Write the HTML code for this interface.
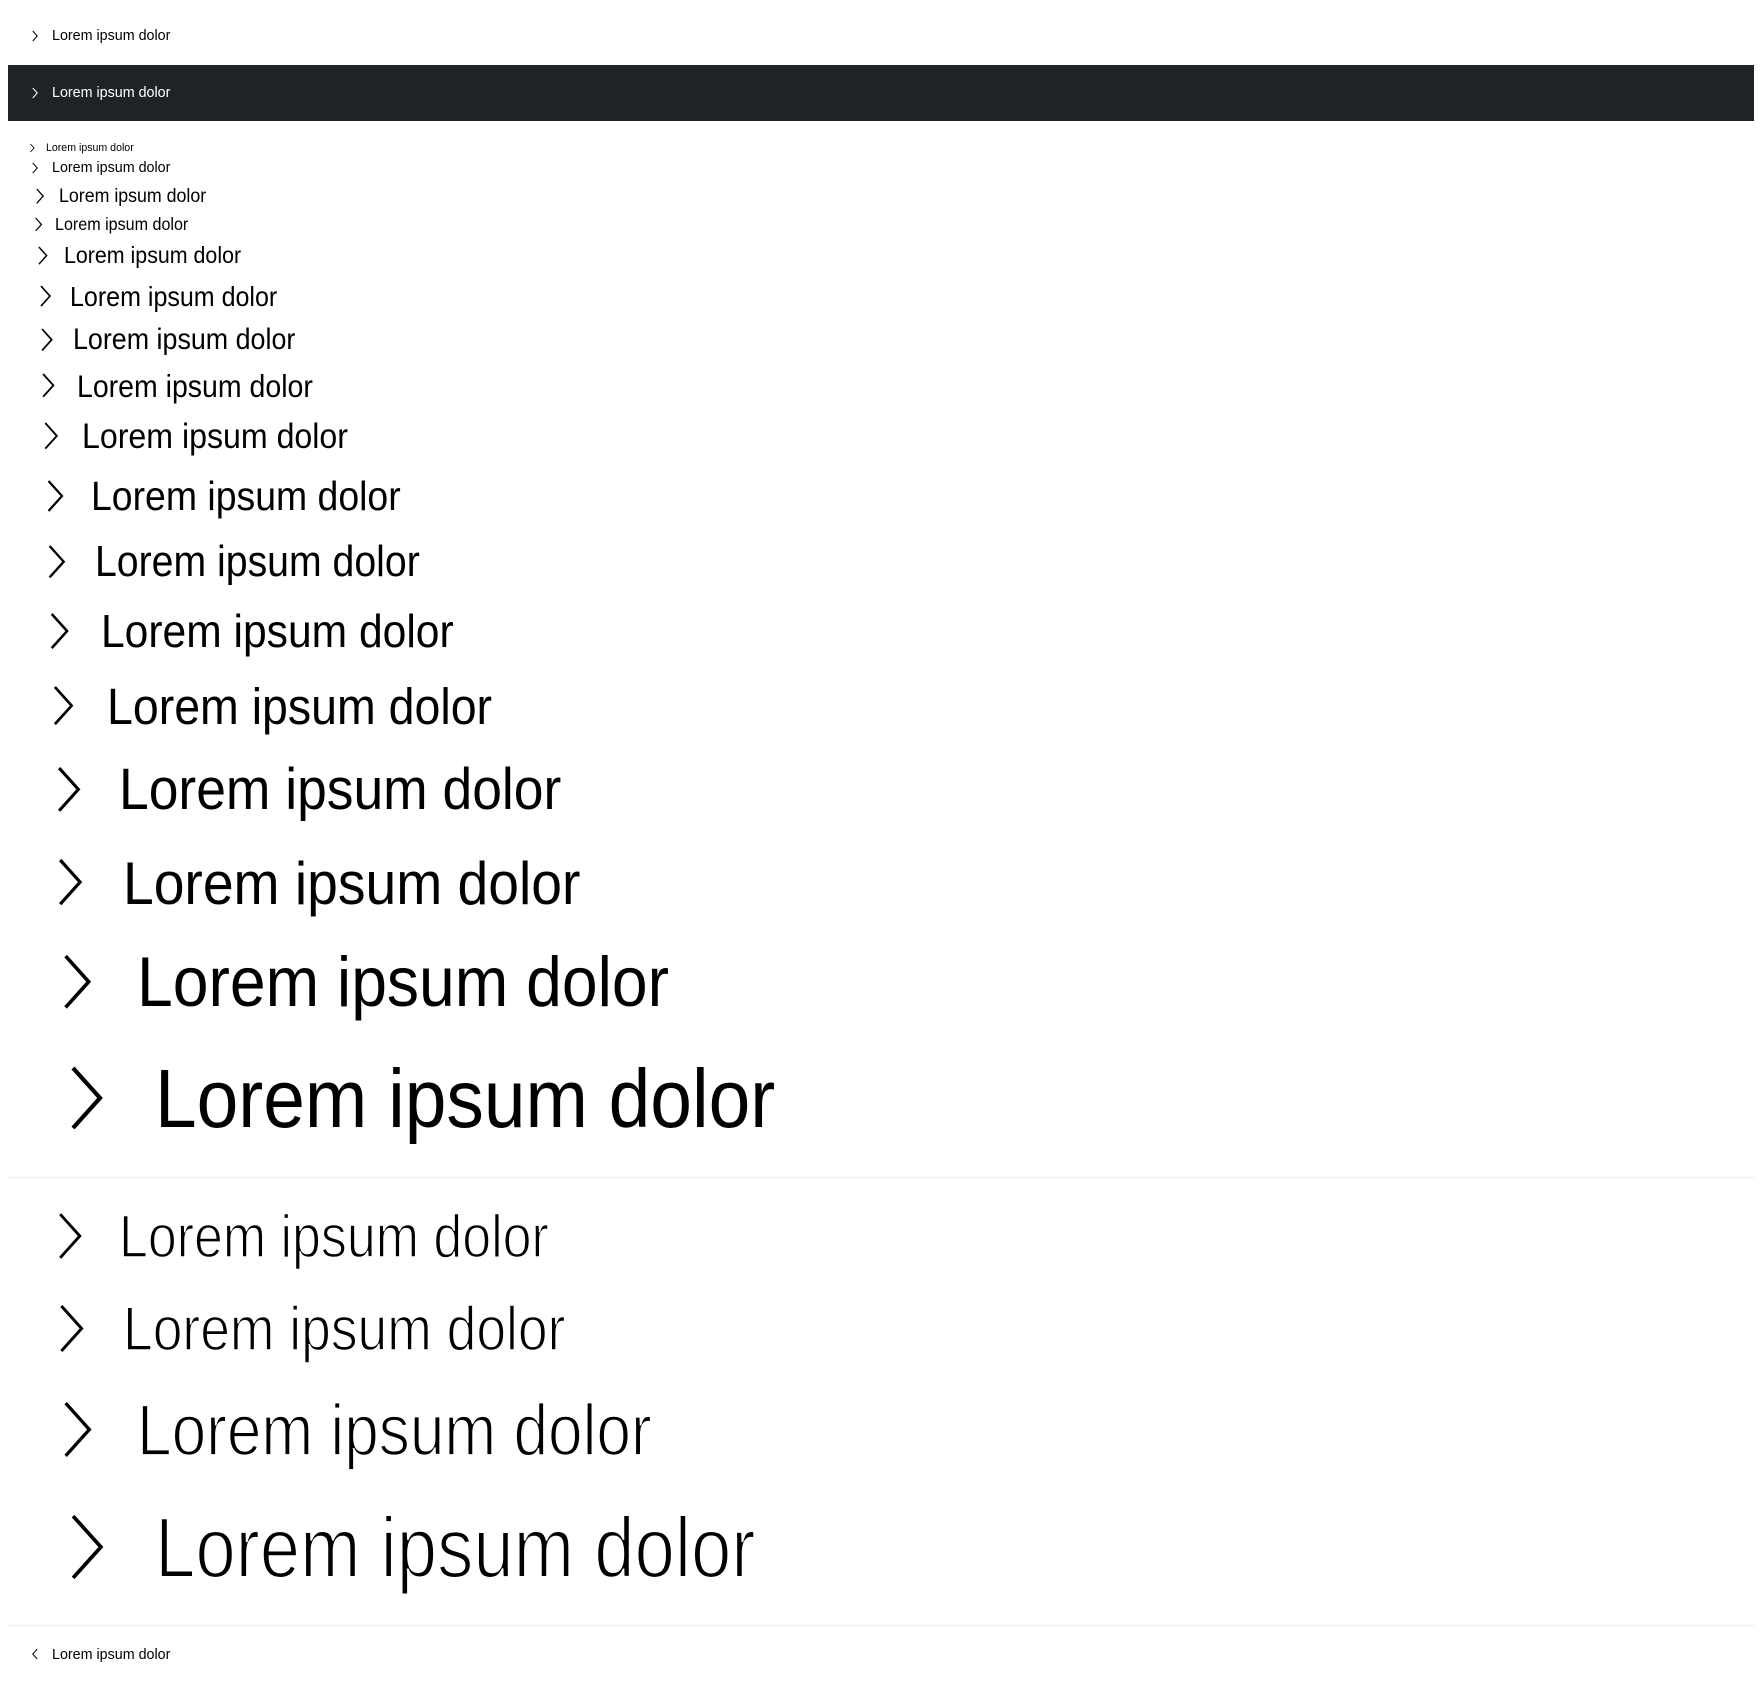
<!DOCTYPE html>
<html><head><meta charset="utf-8"><style>
html,body{margin:0;padding:0;background:#fff;width:1760px;height:1690px;overflow:hidden;position:relative;font-family:"Liberation Sans",sans-serif;}
.t{position:absolute;line-height:1;white-space:nowrap;color:#000;transform-origin:0 0;}
.c{position:absolute;overflow:visible;}
.band{position:absolute;left:8px;top:65px;width:1746px;height:56px;background:#1f2226;}
.sep{position:absolute;left:8px;width:1746px;height:1px;background:#ececec;}
.l{-webkit-text-stroke-color:#fff;}
</style></head><body>
<div class="band"></div>
<div class="sep" style="top:1177px"></div>
<div class="sep" style="top:1625px"></div>

<svg class="c" style="left:32px;top:31px" width="6" height="10" viewBox="0 0 11 20"><path d="M1 0 L10 10 L1 20" fill="none" stroke="#000" stroke-width="2"/></svg>
<div class="t" style="left:52px;top:29px;font-size:14.3px">Lorem ipsum dolor</div>
<svg class="c" style="left:32px;top:88px" width="6" height="10" viewBox="0 0 11 20"><path d="M1 0 L10 10 L1 20" fill="none" stroke="#fff" stroke-width="2"/></svg>
<div class="t" style="left:52px;top:86px;font-size:14.3px;color:#fff">Lorem ipsum dolor</div>
<svg class="c" style="left:30px;top:144px" width="4.5" height="8" viewBox="0 0 11 20"><path d="M1 0 L10 10 L1 20" fill="none" stroke="#000" stroke-width="2.2"/></svg>
<div class="t" style="left:46px;top:142.6px;font-size:10.6px">Lorem ipsum dolor</div>
<svg class="c" style="left:32px;top:163px" width="6" height="10" viewBox="0 0 11 20"><path d="M1 0 L10 10 L1 20" fill="none" stroke="#000" stroke-width="2"/></svg>
<div class="t" style="left:52px;top:160.9px;font-size:14.3px">Lorem ipsum dolor</div>
<svg class="c" style="left:35.6px;top:188.7px" width="7.9" height="14.3" viewBox="0 0 11 20"><path d="M1 0 L10 10 L1 20" fill="none" stroke="#000" stroke-width="1.8"/></svg>
<div class="t" style="left:58.5px;top:186.5px;font-size:19.55px;transform:scaleX(.91)">Lorem ipsum dolor</div>
<svg class="c" style="left:34.5px;top:218.1px" width="7.1" height="12.9" viewBox="0 0 11 20"><path d="M1 0 L10 10 L1 20" fill="none" stroke="#000" stroke-width="1.9"/></svg>
<div class="t" style="left:55px;top:216px;font-size:17.7px;transform:scaleX(.91)">Lorem ipsum dolor</div>
<svg class="c" style="left:37.7px;top:246.8px" width="9.5" height="17.2" viewBox="0 0 11 20"><path d="M1 0 L10 10 L1 20" fill="none" stroke="#000" stroke-width="1.7"/></svg>
<div class="t" style="left:64px;top:244.1px;font-size:23.5px;transform:scaleX(.91)">Lorem ipsum dolor</div>
<svg class="c" style="left:39.9px;top:285.9px" width="11" height="20.1" viewBox="0 0 11 20"><path d="M1 0 L10 10 L1 20" fill="none" stroke="#000" stroke-width="1.6"/></svg>
<div class="t" style="left:70px;top:282.7px;font-size:27.5px;transform:scaleX(.91)">Lorem ipsum dolor</div>
<svg class="c" style="left:40.9px;top:328.5px" width="11.8" height="21.5" viewBox="0 0 11 20"><path d="M1 0 L10 10 L1 20" fill="none" stroke="#000" stroke-width="1.6"/></svg>
<div class="t" style="left:73px;top:325px;font-size:29.5px;transform:scaleX(.91)">Lorem ipsum dolor</div>
<svg class="c" style="left:41.9px;top:374.2px" width="12.5" height="22.8" viewBox="0 0 11 20"><path d="M1 0 L10 10 L1 20" fill="none" stroke="#000" stroke-width="1.6"/></svg>
<div class="t" style="left:76.5px;top:370.5px;font-size:31.3px;transform:scaleX(.91)">Lorem ipsum dolor</div>
<svg class="c" style="left:44px;top:423.3px" width="14.1" height="25.7" viewBox="0 0 11 20"><path d="M1 0 L10 10 L1 20" fill="none" stroke="#000" stroke-width="1.5"/></svg>
<div class="t" style="left:82px;top:419.1px;font-size:35.3px;transform:scaleX(.91)">Lorem ipsum dolor</div>
<svg class="c" style="left:47.2px;top:481px" width="16.5" height="30" viewBox="0 0 11 20"><path d="M1 0 L10 10 L1 20" fill="none" stroke="#000" stroke-width="1.5"/></svg>
<div class="t" style="left:91px;top:476.2px;font-size:41.1px;transform:scaleX(.91)">Lorem ipsum dolor</div>
<svg class="c" style="left:48.2px;top:545.6px" width="17.3" height="31.4" viewBox="0 0 11 20"><path d="M1 0 L10 10 L1 20" fill="none" stroke="#000" stroke-width="1.5"/></svg>
<div class="t" style="left:94.5px;top:540.5px;font-size:43.1px;transform:scaleX(.91)">Lorem ipsum dolor</div>
<svg class="c" style="left:50.2px;top:613.9px" width="18.8" height="34.1" viewBox="0 0 11 20"><path d="M1 0 L10 10 L1 20" fill="none" stroke="#000" stroke-width="1.5"/></svg>
<div class="t" style="left:101px;top:608.4px;font-size:46.8px;transform:scaleX(.91)">Lorem ipsum dolor</div>
<svg class="c" style="left:52.5px;top:687.3px" width="20.5" height="37.2" viewBox="0 0 11 20"><path d="M1 0 L10 10 L1 20" fill="none" stroke="#000" stroke-width="1.45"/></svg>
<div class="t" style="left:107px;top:681.2px;font-size:51.1px;transform:scaleX(.91)">Lorem ipsum dolor</div>
<svg class="c" style="left:56.7px;top:768.2px" width="23.5" height="42.8" viewBox="0 0 11 20"><path d="M1 0 L10 10 L1 20" fill="none" stroke="#000" stroke-width="1.45"/></svg>
<div class="t" style="left:119px;top:761.3px;font-size:58.7px;transform:scaleX(.91)">Lorem ipsum dolor</div>
<svg class="c" style="left:57.7px;top:860.3px" width="24.3" height="44.2" viewBox="0 0 11 20"><path d="M1 0 L10 10 L1 20" fill="none" stroke="#000" stroke-width="1.45"/></svg>
<div class="t" style="left:122.6px;top:853.1px;font-size:60.7px;transform:scaleX(.91)">Lorem ipsum dolor</div>
<svg class="c" style="left:63.1px;top:955.5px" width="28.3" height="51.5" viewBox="0 0 11 20"><path d="M1 0 L10 10 L1 20" fill="none" stroke="#000" stroke-width="1.4"/></svg>
<div class="t" style="left:137px;top:947.2px;font-size:70.6px;transform:scaleX(.91)">Lorem ipsum dolor</div>
<svg class="c" style="left:70px;top:1068px" width="33" height="60" viewBox="0 0 11 20"><path d="M1 0 L10 10 L1 20" fill="none" stroke="#000" stroke-width="1.4"/></svg>
<div class="t" style="left:155px;top:1058.3px;font-size:82.3px;transform:scaleX(.91)">Lorem ipsum dolor</div>

<svg class="c" style="left:58px;top:1214px" width="24" height="44" viewBox="0 0 11 20"><path d="M1 0 L10 10 L1 20" fill="none" stroke="#000" stroke-width="1.3"/></svg>
<div class="t l" style="left:119px;top:1207px;font-size:60px;transform:scaleX(.865);-webkit-text-stroke-width:1.5px">Lorem ipsum dolor</div>

<svg class="c" style="left:59px;top:1306px" width="25" height="45" viewBox="0 0 11 20"><path d="M1 0 L10 10 L1 20" fill="none" stroke="#000" stroke-width="1.3"/></svg>
<div class="t l" style="left:122.6px;top:1298.5px;font-size:61.7px;transform:scaleX(.866);-webkit-text-stroke-width:1.5px">Lorem ipsum dolor</div>

<svg class="c" style="left:63px;top:1403px" width="29" height="53" viewBox="0 0 11 20"><path d="M1 0 L10 10 L1 20" fill="none" stroke="#000" stroke-width="1.25"/></svg>
<div class="t l" style="left:137px;top:1395px;font-size:72.7px;transform:scaleX(.855);-webkit-text-stroke-width:1.8px">Lorem ipsum dolor</div>

<svg class="c" style="left:70px;top:1516px" width="34" height="62" viewBox="0 0 11 20"><path d="M1 0 L10 10 L1 20" fill="none" stroke="#000" stroke-width="1.2"/></svg>
<div class="t l" style="left:155px;top:1506px;font-size:85px;transform:scaleX(.853);-webkit-text-stroke-width:2.1px">Lorem ipsum dolor</div>

<svg class="c" style="left:32px;top:1649px" width="6" height="10" viewBox="0 0 11 20"><path d="M10 0 L1 10 L10 20" fill="none" stroke="#000" stroke-width="2"/></svg>
<div class="t" style="left:52px;top:1647.5px;font-size:14.3px">Lorem ipsum dolor</div>
</body></html>
